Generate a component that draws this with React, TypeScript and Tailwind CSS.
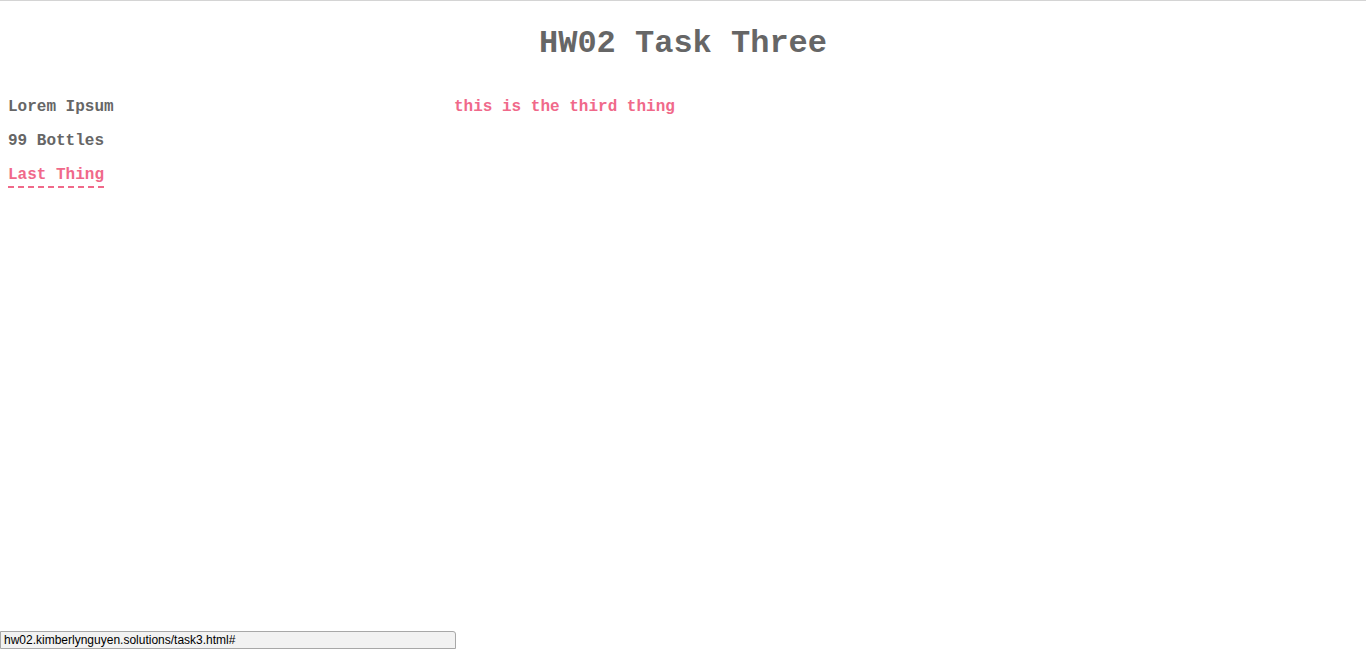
export default function App() {
  return (
    <div className="relative h-[649px] bg-white border-t border-[#d4d4d4] font-['Courier_New','Liberation_Mono',monospace] text-[#666666] overflow-hidden">
      <h1 className="mt-[24px] text-center text-[32px] leading-[37px] font-bold">HW02 Task Three</h1>

      <div className="mt-[36px] px-2 flex">
        <div className="w-[446px] flex flex-col gap-[16px] text-base leading-[18px] font-bold">
          <p>Lorem Ipsum</p>
          <p>99 Bottles</p>
          <p>
            <a href="#" className="text-[#f0698a] border-b-2 border-dashed border-[#f0698a] pb-[2px]">
              Last Thing
            </a>
          </p>
        </div>
        <div className="text-base leading-[18px] font-bold text-[#f0698a]">this is the third thing</div>
      </div>

      <div className="absolute left-0 bottom-0 w-[456px] h-[18px] bg-[#f2f2f2] border border-[#a8a8a8] rounded-tr-[3px] px-[3px] text-[12px] leading-[16px] text-black font-['Liberation_Sans',Arial,sans-serif]">
        hw02.kimberlynguyen.solutions/task3.html#
      </div>
    </div>
  );
}
